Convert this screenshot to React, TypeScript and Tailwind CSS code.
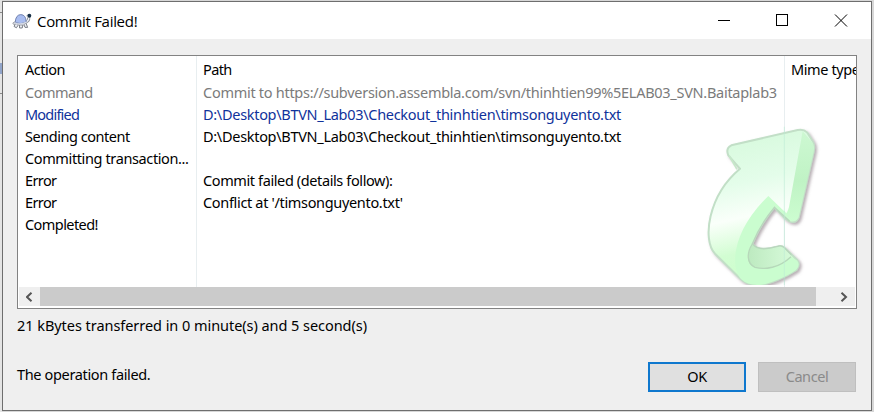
const rows = [
  { action: 'Command', fit: 'tracking-[-0.49px]', path: 'Commit to https://subversion.assembla.com/svn/thinhtien99%5ELAB03_SVN.Baitaplab3', color: 'text-[#7b7b7b]', track: 'tracking-[-0.28px]' },
  { action: 'Modified', fit: 'tracking-[-0.8px]', path: 'D:\\Desktop\\BTVN_Lab03\\Checkout_thinhtien\\timsonguyento.txt', color: 'text-[#0f329b]', track: 'tracking-[-0.3px]' },
  { action: 'Sending content', fit: 'tracking-[-0.46px]', path: 'D:\\Desktop\\BTVN_Lab03\\Checkout_thinhtien\\timsonguyento.txt', color: 'text-black', track: 'tracking-[-0.3px]' },
  { action: 'Committing transaction...', fit: 'tracking-[-0.38px]', path: '', color: 'text-black', track: '' },
  { action: 'Error', fit: 'tracking-[-0.6px]', path: 'Commit failed (details follow):', color: 'text-black', track: 'tracking-[-0.39px]' },
  { action: 'Error', fit: 'tracking-[-0.6px]', path: "Conflict at '/timsonguyento.txt'", color: 'text-black', track: 'tracking-[-0.33px]' },
  { action: 'Completed!', fit: 'tracking-[-0.57px]', path: '', color: 'text-black', track: '' },
];

function TurtleIcon() {
  return (
    <svg width="20" height="16" viewBox="0 0 20 16" className="shrink-0">
      <path d="M3.4 8.6 L.8 10 L1.6 11.4 L4 10.8Z" fill="#f1f2f6" stroke="#8a8e96" strokeWidth=".8" />
      <path d="M3.6 10.4 L2 13.4 L4.4 14.8 L6.6 11.6Z M7.4 11.8 L7.6 15 H10.2 L11 12Z M11.8 11.4 L13 14.4 H15.6 L14 10Z" fill="#e9ebf0" stroke="#6f747d" strokeWidth=".9" />
      <path d="M13.4 8.8 Q17 8.4 16.8 4.4" fill="none" stroke="#8b9098" strokeWidth="3" />
      <path d="M13.4 8.8 Q17 8.4 16.8 4.4" fill="none" stroke="#f2f4f8" strokeWidth="1.4" />
      <path d="M3.2 9.6 Q3.6 1.8 8.8 1.6 Q14 1.8 14.2 9 Q9 12 3.2 9.6Z" fill="#a9bdf0" stroke="#7484b0" strokeWidth="1" />
      <path d="M2.6 9.8 Q8.4 12.6 14.6 9.2" fill="none" stroke="#d4d9e6" strokeWidth="1.4" />
      <circle cx="17.3" cy="2.7" r="2" fill="#173047" />
      <path d="M14.6 2.6 L16 4.4" stroke="#a5acb6" />
    </svg>
  );
}

function CommitArrow() {
  return (
    <svg width="130" height="159" viewBox="30 48 390 477" className="pointer-events-none absolute left-[682px] top-[70px]">
      <defs>
        <linearGradient id="band" x1="0" y1="0" x2="0.15" y2="1">
          <stop offset="0" stopColor="#d4f9da" />
          <stop offset=".38" stopColor="#e4fdea" />
          <stop offset=".6" stopColor="#fafffa" />
          <stop offset=".82" stopColor="#d2fdd2" />
          <stop offset="1" stopColor="#ccffcc" />
        </linearGradient>
        <linearGradient id="inner" x1="0" y1="0" x2="1" y2="0">
          <stop offset="0" stopColor="#bdeac0" />
          <stop offset="1" stopColor="#d6fad9" />
        </linearGradient>
        <linearGradient id="side" x1="0" y1="0" x2="0" y2="1">
          <stop offset="0" stopColor="#cdf8d2" />
          <stop offset=".55" stopColor="#c0f3c5" />
          <stop offset="1" stopColor="#ccfdd0" />
        </linearGradient>
        <filter id="shade" x="-10%" y="-10%" width="125%" height="120%">
          <feDropShadow dx="6" dy="6" stdDeviation="5" floodColor="#806f79" floodOpacity=".55" />
        </filter>
      </defs>
      <g filter="url(#shade)">
        <path d="M124 106 L323 60 Q340 56 351 67 L368 94 Q375 106 371 125 L326 322 Q318 341 299 334 L285 325 L253 292 C233 316 208 350 187 401 Q203 427 263 409 Q274 405 283 413 L321 449 Q332 464 319 480 C289 500 242 520 216 524 Q176 529 151 506 L75 431 C36 390 54 256 150 176 L115 136 Q106 115 124 106Z" fill="url(#band)" stroke="#c2dfc7" strokeWidth="6" strokeLinejoin="round" />
      </g>
      <path d="M338 64 L368 98 Q374 108 371 125 L326 322 Q317 339 299 333 L282 318 Q292 310 297 291Z" fill="url(#side)" />
      <path d="M235 258 L281 302 Q287 300 297 333 L253 292 C233 316 208 350 187 401 Q156 445 188 471 Q238 490 303 441 L322 452 Q332 466 318 480 C286 502 242 520 216 524 Q176 529 153 507 C115 460 137 351 235 258Z" fill="#cafdcf" />
      <path d="M187 402 Q202 427 263 409 Q274 405 283 413 L304 440 Q260 476 205 474 C164 471 171 431 187 402Z" fill="url(#inner)" />
      <path d="M303 440 C267 474 225 480 195 472 C169 460 170 428 187 402" fill="none" stroke="#b6d8ba" strokeWidth="4" />
      <path d="M299 334 L253 292 C233 316 208 350 187 401 Q203 427 263 409 Q274 405 283 413 L304 434" fill="none" stroke="#b9d6bd" strokeWidth="4" />
      <path d="M118 138 L141 178" stroke="#c6e8ca" strokeWidth="5" />
      <path d="M283 50 V525" stroke="#bcebd5" strokeOpacity=".6" strokeWidth="3" />
    </svg>
  );
}

export default function App() {
  return (
    <div className="flex h-[412px] w-[874px] overflow-hidden bg-[#d7d7d7] font-['Noto_Sans','Open_Sans',sans-serif] text-[14.5px] text-black">
      <div className="flex w-[2px] shrink-0 flex-col bg-[#e4e4e4]">
        <div className="mt-[12px] h-px bg-[#888888]" />
        <div className="mt-[50px] h-[11px] bg-[#91a4c9]" />
        <div className="mt-[19px] h-px bg-[#888888]" />
      </div>
      <div className="mt-px flex h-[410px] w-[870px] flex-col border border-[#6e6e6e] bg-[#efefef]">
        <header className="flex h-[37px] shrink-0 items-center bg-white pl-[9px]">
          <TurtleIcon />
          <h1 className="ml-[5px] font-['Open_Sans',sans-serif] text-[15px] leading-5 tracking-[-0.3px]">Commit Failed!</h1>
          <svg width="130" height="14" viewBox="0 0 130 14" className="ml-auto mr-[23px]" fill="none" stroke="#000" shapeRendering="crispEdges">
            <path d="M0 6.5 H12" />
            <rect x="58.5" y="0.5" width="11" height="11" />
            <path d="M117 .5 L129 12.5 M129 .5 L117 12.5" shapeRendering="auto" />
          </svg>
        </header>
        <main className="flex grow flex-col px-[14px] pt-[16px]">
          <section className="relative flex h-[254px] w-[840px] shrink-0 flex-col overflow-hidden border border-[#828282] bg-white">
            <div className="flex h-[231px]">
              <div className="w-[179px] border-r border-[#e8eef0] pl-[7px] pt-[2px] leading-[22px]">
                <div className="h-[23px]"><span className="tracking-[-0.5px]">Action</span></div>
                {rows.map((r, i) => (
                  <div key={i} className={`h-[22px] whitespace-nowrap ${r.color}`}><span className={r.fit}>{r.action}</span></div>
                ))}
              </div>
              <div className="w-[588px] border-r border-[#e8eef0] pl-[6px] pt-[2px] leading-[22px]">
                <div className="h-[23px]"><span className="tracking-[-0.6px]">Path</span></div>
                {rows.map((r, i) => (
                  <div key={i} className={`h-[22px] whitespace-nowrap ${r.color}`}><span className={r.track}>{r.path}</span></div>
                ))}
              </div>
              <div className="w-[71px] overflow-hidden whitespace-nowrap pl-[6px] pt-[2px] leading-[22px] tracking-[-0.4px]">Mime type</div>
            </div>
            <CommitArrow />
            <div className="mx-px flex h-[19px] bg-[#efefef]">
              <div className="flex w-[21px] items-center justify-center">
                <svg width="8" height="10" viewBox="0 0 8 10" fill="none" stroke="#555" strokeWidth="2"><path d="M5.5 .8 L1 5 L5.5 9.2" /></svg>
              </div>
              <div className="w-[776px] bg-[#cbcbcb]" />
              <div className="flex grow items-center justify-center pl-[17px]">
                <svg width="8" height="10" viewBox="0 0 8 10" fill="none" stroke="#555" strokeWidth="2"><path d="M1.5 .8 L6 5 L1.5 9.2" /></svg>
              </div>
            </div>
          </section>
          <p className="mt-[6px] leading-5 tracking-[-0.05px]">21 kBytes transferred in 0 minute(s) and 5 second(s)</p>
          <footer className="mt-[27px] flex items-start">
            <p className="mt-[2px] leading-5 tracking-[-0.35px]">The operation failed.</p>
            <button className="ml-auto h-[30px] w-[98px] border-2 border-[#0f78ce] bg-[#e0e0e0] tracking-[-0.4px]">OK</button>
            <button disabled className="ml-[12px] mr-px h-[30px] w-[98px] border border-[#bfbfbf] bg-[#cbcbcb] text-[#8a8a8a] tracking-[-0.4px]">Cancel</button>
          </footer>
        </main>
      </div>
    </div>
  );
}
